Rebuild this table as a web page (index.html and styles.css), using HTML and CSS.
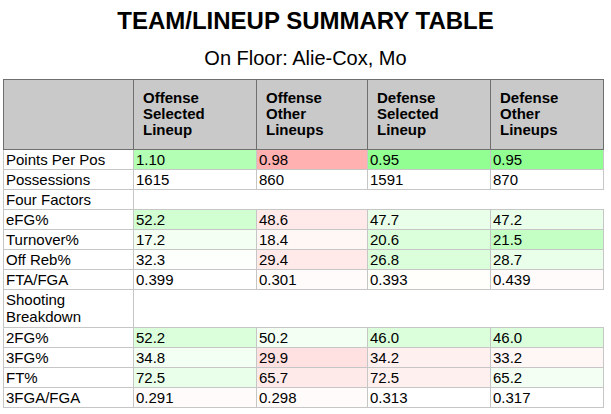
FILE: index.html
```html
<!DOCTYPE html>
<html>
<head>
<meta charset="utf-8">
<title>Team/Lineup Summary Table</title>
<link rel="stylesheet" href="styles.css">
</head>
<body>
<div class="page">
  <header class="heading">
    <h1 class="title">TEAM/LINEUP SUMMARY TABLE</h1>
    <h2 class="subtitle">On Floor: Alie-Cox, Mo</h2>
  </header>
  <table class="summary">
    <colgroup>
      <col class="c-label">
      <col class="c-os">
      <col class="c-oo">
      <col class="c-ds">
      <col class="c-do">
    </colgroup>
    <thead>
      <tr>
        <th></th>
        <th>Offense<br>Selected<br>Lineup</th>
        <th>Offense<br>Other<br>Lineups</th>
        <th>Defense<br>Selected<br>Lineup</th>
        <th>Defense<br>Other<br>Lineups</th>
      </tr>
    </thead>
    <tbody>
      <tr>
        <td>Points Per Pos</td>
        <td class="g-ppp1">1.10</td>
        <td class="r-ppp">0.98</td>
        <td class="g-ppp2">0.95</td>
        <td class="g-ppp2">0.95</td>
      </tr>
      <tr>
        <td>Possessions</td>
        <td>1615</td>
        <td>860</td>
        <td>1591</td>
        <td>870</td>
      </tr>
      <tr>
        <td>Four Factors</td>
        <td class="blank" colspan="4"></td>
      </tr>
      <tr>
        <td>eFG%</td>
        <td class="g3">52.2</td>
        <td class="r1">48.6</td>
        <td class="g1">47.7</td>
        <td class="g1">47.2</td>
      </tr>
      <tr>
        <td>Turnover%</td>
        <td class="g0">17.2</td>
        <td class="r0">18.4</td>
        <td class="g2">20.6</td>
        <td class="g4">21.5</td>
      </tr>
      <tr>
        <td>Off Reb%</td>
        <td class="gz">32.3</td>
        <td class="r1">29.4</td>
        <td class="g2">26.8</td>
        <td class="g1">28.7</td>
      </tr>
      <tr>
        <td>FTA/FGA</td>
        <td>0.399</td>
        <td class="rz">0.301</td>
        <td class="yz">0.393</td>
        <td class="rz">0.439</td>
      </tr>
      <tr>
        <td class="wrap">Shooting<br>Breakdown</td>
        <td class="blank" colspan="4"></td>
      </tr>
      <tr>
        <td>2FG%</td>
        <td class="g2">52.2</td>
        <td class="g0">50.2</td>
        <td class="g2">46.0</td>
        <td class="g2">46.0</td>
      </tr>
      <tr>
        <td>3FG%</td>
        <td class="g0">34.8</td>
        <td class="r2">29.9</td>
        <td class="r0b">34.2</td>
        <td class="r0">33.2</td>
      </tr>
      <tr>
        <td>FT%</td>
        <td class="g1">72.5</td>
        <td class="r1b">65.7</td>
        <td class="r0b">72.5</td>
        <td class="g0">65.2</td>
      </tr>
      <tr>
        <td>3FGA/FGA</td>
        <td class="rz">0.291</td>
        <td class="rz">0.298</td>
        <td>0.313</td>
        <td>0.317</td>
      </tr>
    </tbody>
  </table>
</div>
</body>
</html>
```

FILE: styles.css
```css
html, body {
  margin: 0;
  padding: 0;
  background: #ffffff;
}

.page {
  padding: 7px 0 0 3px;
  font-family: "Liberation Sans", Arial, Helvetica, sans-serif;
  color: #000;
}

.heading {
  text-align: center;
  padding-right: 3px;
}

.title {
  margin: 0;
  font-size: 24px;
  line-height: 28px;
  font-weight: bold;
}

.subtitle {
  margin: 12px 0 0;
  font-size: 20px;
  line-height: 23px;
  font-weight: normal;
}

.summary {
  margin-top: 9px;
  border-collapse: collapse;
  table-layout: fixed;
  width: 600px;
  font-size: 15px;
}

.c-label { width: 130px; }
.c-os { width: 123px; }
.c-oo { width: 111px; }
.c-ds { width: 123px; }
.c-do { width: 113px; }

.summary th {
  background: #c9c9c9;
  border: 1px solid #6f6f6f;
  text-align: left;
  vertical-align: top;
  font-weight: bold;
  line-height: 16px;
  padding: 10px 4px 11px 9px;
}

.summary td {
  border: 1px solid #c6c6c6;
  padding: 1px 2px;
  line-height: 17px;
  vertical-align: top;
  white-space: nowrap;
}

.summary td.wrap {
  padding-bottom: 2px;
}

.summary td.blank {
  border-right: none;
}

.g-ppp1 { background: #b3ffb3; }
.g-ppp2 { background: #91ff91; }
.r-ppp { background: #ffb0b0; }

.g4 { background: #c4ffc4; }
.g3 { background: #d2ffd2; }
.g2 { background: #dbffdb; }
.g1 { background: #e9ffe9; }
.g0 { background: #f2fff2; }
.gz { background: #fcfffc; }

.r2 { background: #ffe1e1; }
.r1 { background: #ffe9e9; }
.r1b { background: #ffeaea; }
.r0b { background: #fff0f0; }
.r0 { background: #fff6f6; }
.rz { background: #fffbfa; }
.yz { background: #fffffb; }
```
